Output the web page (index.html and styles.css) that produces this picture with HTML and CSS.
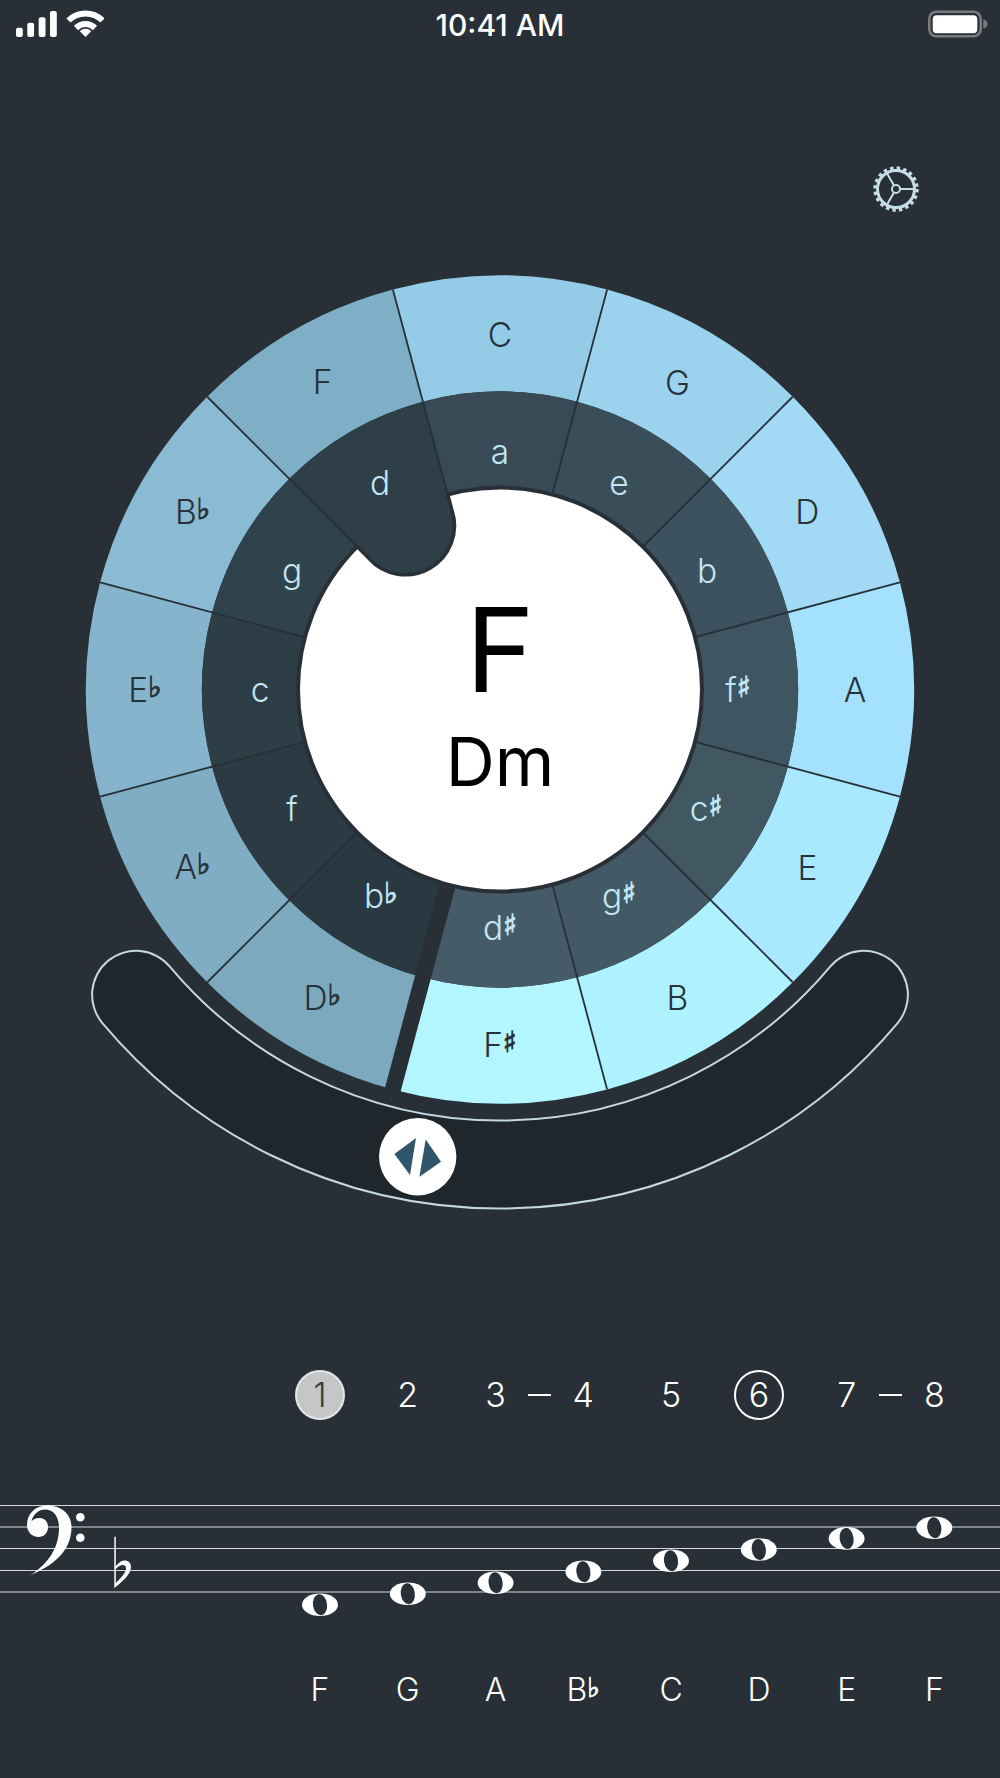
FILE: index.html
```html
<!DOCTYPE html>
<html lang="en">
<head>
    <meta charset="UTF-8">
    <meta name="viewport" content="width=device-width, initial-scale=1.0">
    <title>Circle of Fifths</title>
    <link rel="stylesheet" href="styles.css">
</head>
<body>
    <div class="screen">
        <div class="status">
            <svg class="status-left" width="88" height="28" viewBox="16 10 88 28">
                <rect class="white" x="16" y="27.7" width="6.8" height="9.3" rx="2"/>
                <rect class="white" x="27.3" y="22.7" width="6.8" height="14.3" rx="2"/>
                <rect class="white" x="38.7" y="17.3" width="6.8" height="19.7" rx="2"/>
                <rect class="white" x="50" y="11" width="6.8" height="26" rx="2"/>
                <path class="wifi" d="M68.5 20.5A24 24 0 0 1 102.5 20.5"/>
                <path class="wifi" d="M76 28A13.5 13.5 0 0 1 95 28"/>
                <path class="white" d="M85.5 37L79.8 31.2A8 8 0 0 1 91.2 31.2Z"/>
            </svg>
            <div class="time">10:41 AM</div>
            <svg class="status-right" width="60" height="28" viewBox="928 10 60 28">
                <rect class="batt-border" x="929.3" y="11.7" width="51.4" height="24.6" rx="7"/>
                <rect class="white" x="932.7" y="15.3" width="44.6" height="18" rx="4"/>
                <path class="batt-nub" d="M983.3 19.3C986 20 987.5 22 987.5 24C987.5 26 986 28 983.3 28.7Z"/>
            </svg>
        </div>

        <div class="settings">
            <svg width="48" height="48" viewBox="-24 -24 48 48">
                <circle class="gear gear-ring" r="18.5"/>
                <circle class="gear gear-teeth" r="21"/>
                <circle class="gear" r="4"/>
                <path class="gear" d="M4 0H18M-2 -3.5L-9.2 -16M-2 3.5L-9.2 16"/>
            </svg>
        </div>

        <svg class="wheel" width="1000" height="970" viewBox="-500 -449.5 1000 970">
            <defs>
                <path id="major" d="M-77.13 -287.85L-107.15 -399.9A414 414 0 0 1 107.15 -399.9L77.13 -287.85A298 298 0 0 0 -77.13 -287.85Z"/>
                <path id="minor" d="M-77.13 -287.85A298 298 0 0 1 77.13 -287.85L51.76 -193.2A200 200 0 0 0 -51.76 -193.2Z"/>
            </defs>

            <!-- transpose slider sits behind the wheel -->
            <path class="groove-edge" d="M-363.9 305.3A475 475 0 0 0 363.9 305.3"/>
            <path class="groove" d="M-363.9 305.3A475 475 0 0 0 363.9 305.3"/>

            <!-- outer ring, major keys -->
            <use href="#major" class="maj-c"/>
            <use href="#major" class="maj-g" transform="rotate(30)"/>
            <use href="#major" class="maj-d" transform="rotate(60)"/>
            <use href="#major" class="maj-a" transform="rotate(90)"/>
            <use href="#major" class="maj-e" transform="rotate(120)"/>
            <use href="#major" class="maj-b" transform="rotate(150)"/>
            <use href="#major" class="maj-fs" transform="rotate(180)"/>
            <use href="#major" class="maj-db" transform="rotate(210)"/>
            <use href="#major" class="maj-ab" transform="rotate(240)"/>
            <use href="#major" class="maj-eb" transform="rotate(270)"/>
            <use href="#major" class="maj-bb" transform="rotate(300)"/>
            <use href="#major" class="maj-f" transform="rotate(330)"/>

            <!-- inner ring, relative minors -->
            <use href="#minor" class="min-a"/>
            <use href="#minor" class="min-e" transform="rotate(30)"/>
            <use href="#minor" class="min-b" transform="rotate(60)"/>
            <use href="#minor" class="min-fs" transform="rotate(90)"/>
            <use href="#minor" class="min-cs" transform="rotate(120)"/>
            <use href="#minor" class="min-gs" transform="rotate(150)"/>
            <use href="#minor" class="min-ds" transform="rotate(180)"/>
            <use href="#minor" class="min-bb" transform="rotate(210)"/>
            <use href="#minor" class="min-f" transform="rotate(240)"/>
            <use href="#minor" class="min-c" transform="rotate(270)"/>
            <use href="#minor" class="min-g" transform="rotate(300)"/>

            <circle class="hub" r="202"/>

            <!-- selected minor bulges into the hub -->
            <g transform="rotate(-30)">
                <path class="min-d" d="M-77.13 -287.85A298 298 0 0 1 77.13 -287.85L48 -179.2A49 49 0 0 1 -48 -179.2Z"/>
                <path class="bulge" d="M53.2 -198.6L48 -179.2A49 49 0 0 1 -48 -179.2L-53.2 -198.6"/>
            </g>

            <!-- spokes between the keys -->
            <g class="spokes">
                <line y1="-204" y2="-414" transform="rotate(15)"/>
                <line y1="-204" y2="-414" transform="rotate(45)"/>
                <line y1="-204" y2="-414" transform="rotate(75)"/>
                <line y1="-204" y2="-414" transform="rotate(105)"/>
                <line y1="-204" y2="-414" transform="rotate(135)"/>
                <line y1="-204" y2="-414" transform="rotate(165)"/>
                <line y1="-204" y2="-414" transform="rotate(225)"/>
                <line y1="-204" y2="-414" transform="rotate(255)"/>
                <line y1="-204" y2="-414" transform="rotate(285)"/>
                <line y1="-204" y2="-414" transform="rotate(315)"/>
                <line y1="-190" y2="-414" transform="rotate(345)"/>
            </g>
            <line class="seam" y1="-201" y2="-416" transform="rotate(195)"/>

            <g class="label-major">
                <text x="0" y="-355" dy=".36em">C</text>
                <text x="177.5" y="-307" dy=".36em">G</text>
                <text x="307.4" y="-177.5" dy=".36em">D</text>
                <text x="355" y="0" dy=".36em">A</text>
                <text x="307.4" y="178" dy=".36em">E</text>
                <text x="177.5" y="308.4" dy=".36em">B</text>
                <text x="0" y="355" dy=".36em">F<tspan class="acc">♯</tspan></text>
                <text x="-177.5" y="308" dy=".36em">D<tspan class="acc">♭</tspan></text>
                <text x="-307.4" y="177.5" dy=".36em">A<tspan class="acc">♭</tspan></text>
                <text x="-355" y="0" dy=".36em">E<tspan class="acc">♭</tspan></text>
                <text x="-307.4" y="-177.5" dy=".36em">B<tspan class="acc">♭</tspan></text>
                <text x="-177.5" y="-307.4" dy=".36em">F</text>
            </g>
            <g class="label-minor">
                <text x="0" y="-238" dy=".36em">a</text>
                <text x="119" y="-206.1" dy=".36em">e</text>
                <text x="207" y="-119" dy=".36em">b</text>
                <text x="238" y="0" dy=".36em">f<tspan class="acc">♯</tspan></text>
                <text x="206.1" y="119" dy=".36em">c<tspan class="acc">♯</tspan></text>
                <text x="119" y="206.1" dy=".36em">g<tspan class="acc">♯</tspan></text>
                <text x="0" y="238" dy=".36em">d<tspan class="acc">♯</tspan></text>
                <text x="-119" y="206.1" dy=".36em">b<tspan class="acc">♭</tspan></text>
                <text x="-208" y="119" dy=".36em">f</text>
                <text x="-240" y="0" dy=".36em">c</text>
                <text x="-208" y="-119" dy=".36em">g</text>
                <text x="-120" y="-207" dy=".36em">d</text>
            </g>

            <text class="key-major" x="0" y="2.5">F</text>
            <text class="key-minor" x="0" y="96">Dm</text>

            <!-- slider knob -->
            <g transform="translate(-82.3 467.2)">
                <circle class="white" r="38.7"/>
                <path class="knob-arrow" d="M-1.7 -18.7L-23.3 -2.7L-7.7 18.3Z"/>
                <path class="knob-arrow" d="M8 -17.3L23.3 5L1.7 20Z"/>
            </g>
        </svg>

        <div class="steps">
            <div class="step step-root">1</div>
            <div class="step">2</div>
            <div class="step step-tie">3</div>
            <div class="step">4</div>
            <div class="step">5</div>
            <div class="step step-mark">6</div>
            <div class="step step-tie">7</div>
            <div class="step">8</div>
        </div>

        <svg class="stave" width="1000" height="130" viewBox="0 1490 1000 130">
            <g class="stave-lines">
                <line x1="0" x2="1000" y1="1505.5" y2="1505.5"/>
                <line x1="0" x2="1000" y1="1527" y2="1527"/>
                <line x1="0" x2="1000" y1="1548.5" y2="1548.5"/>
                <line x1="0" x2="1000" y1="1570.5" y2="1570.5"/>
                <line x1="0" x2="1000" y1="1592" y2="1592"/>
            </g>

            <!-- bass clef -->
            <path class="white" d="M30.5 1575C52 1566 71.5 1552 71.5 1527C71.5 1513 60 1505.5 47 1505.5C35 1505.5 27 1514 27 1525C27 1532 32 1537 38.5 1537C44 1537 48 1533 48 1527C48 1521 44 1518 39 1518C36 1518 33 1519.5 31.5 1521.5C33 1514 39 1509.5 45 1509.5C54 1509.5 59 1517 59 1528C59 1548 48 1564 30.5 1575Z"/>
            <circle class="white" cx="80.3" cy="1517.3" r="4.3"/>
            <circle class="white" cx="80.3" cy="1537.7" r="4.3"/>

            <!-- key signature flat -->
            <path class="white" fill-rule="evenodd" d="M114.3 1536.7V1588C122 1582 131 1574 131 1567C131 1561 125 1559 120 1562L115.8 1566V1536.7ZM115.8 1569C118.5 1565 125 1563 126 1567.5C127 1572 121 1578 115.8 1583Z"/>

            <g class="note" transform="translate(320 1604.7)"><ellipse class="white" rx="18" ry="11.3"/><ellipse class="note-hole" rx="7" ry="10.6" transform="rotate(-8)"/></g>
            <g class="note" transform="translate(407.8 1593.7)"><ellipse class="white" rx="18" ry="11.3"/><ellipse class="note-hole" rx="7" ry="10.6" transform="rotate(-8)"/></g>
            <g class="note" transform="translate(495.6 1582.7)"><ellipse class="white" rx="18" ry="11.3"/><ellipse class="note-hole" rx="7" ry="10.6" transform="rotate(-8)"/></g>
            <g class="note" transform="translate(583.4 1571.7)"><ellipse class="white" rx="18" ry="11.3"/><ellipse class="note-hole" rx="7" ry="10.6" transform="rotate(-8)"/></g>
            <g class="note" transform="translate(671 1560.7)"><ellipse class="white" rx="18" ry="11.3"/><ellipse class="note-hole" rx="7" ry="10.6" transform="rotate(-8)"/></g>
            <g class="note" transform="translate(758.8 1549.5)"><ellipse class="white" rx="18" ry="11.3"/><ellipse class="note-hole" rx="7" ry="10.6" transform="rotate(-8)"/></g>
            <g class="note" transform="translate(846.6 1538.4)"><ellipse class="white" rx="18" ry="11.3"/><ellipse class="note-hole" rx="7" ry="10.6" transform="rotate(-8)"/></g>
            <g class="note" transform="translate(934.3 1527.7)"><ellipse class="white" rx="18" ry="11.3"/><ellipse class="note-hole" rx="7" ry="10.6" transform="rotate(-8)"/></g>
        </svg>

        <div class="names">
            <div>F</div>
            <div>G</div>
            <div>A</div>
            <div>B<span class="acc">♭</span></div>
            <div>C</div>
            <div>D</div>
            <div>E</div>
            <div>F</div>
        </div>
    </div>
</body>
</html>
```

FILE: styles.css
```css
*{
    margin: 0;
    padding: 0;
    box-sizing: border-box;
}
body{
    background: #282f36;
    font-family: "Inter", "Liberation Sans", sans-serif;
}
svg{
    display: block;
}
.screen{
    width: 1000px;
    height: 1778px;
    overflow: hidden;
    background: #282f36;
}
.white{
    fill: #fff;
}

/* status bar */
.status{
    height: 150px;
    padding: 10px 12px 0 16px;
    display: grid;
    grid-template-columns: 1fr auto 1fr;
    align-items: start;
}
.status-right{
    justify-self: end;
}
.time{
    margin-right: 4px;
    font-size: 30px;
    font-weight: 500;
    line-height: 31px;
    color: #fff;
}
.wifi{
    fill: none;
    stroke: #fff;
    stroke-width: 6;
}
.batt-border{
    fill: none;
    stroke: #777c80;
    stroke-width: 2.6;
}
.batt-nub{
    fill: #777c80;
}

/* settings gear */
.settings{
    height: 90px;
    padding: 15px 80px 0 0;
    display: flex;
    justify-content: flex-end;
}
.gear{
    fill: none;
    stroke: #c5dde6;
    stroke-width: 2;
}
.gear-ring{
    stroke-width: 3;
}
.gear-teeth{
    stroke-width: 3.4;
    stroke-dasharray: 3.4 3.2;
}

/* wheel */
.groove-edge{
    fill: none;
    stroke: #c3d8e0;
    stroke-width: 90;
    stroke-linecap: round;
}
.groove{
    fill: none;
    stroke: #1f272d;
    stroke-width: 86;
    stroke-linecap: round;
}
.maj-c{ fill: #94cbe7; }
.maj-g{ fill: #9bd2ee; }
.maj-d{ fill: #a2d9f5; }
.maj-a{ fill: #a4e1fc; }
.maj-e{ fill: #a9e9ff; }
.maj-b{ fill: #aef2ff; }
.maj-fs{ fill: #b3f6ff; }
.maj-db{ fill: #7da9bf; }
.maj-ab{ fill: #81adc4; }
.maj-eb{ fill: #86b4cd; }
.maj-bb{ fill: #8abad4; }
.maj-f{ fill: #7fafc6; }
.min-a{ fill: #374a55; }
.min-e{ fill: #394e59; }
.min-b{ fill: #3c525e; }
.min-fs{ fill: #3f5561; }
.min-cs{ fill: #415762; }
.min-gs{ fill: #435a66; }
.min-ds{ fill: #455c68; }
.min-bb{ fill: #293841; }
.min-f{ fill: #2b3a43; }
.min-c{ fill: #2d3e47; }
.min-g{ fill: #30434c; }
.min-d{ fill: #2e3f48; }
.hub{
    fill: #fff;
    stroke: #282f36;
    stroke-width: 4;
}
.bulge{
    fill: none;
    stroke: #282f36;
    stroke-width: 3.5;
}
.spokes line{
    stroke: #273037;
    stroke-width: 1.8;
}
.seam{
    stroke: #282f36;
    stroke-width: 16;
}
.wheel text{
    text-anchor: middle;
}
.label-major{
    font-size: 33.5px;
    font-weight: 350;
    fill: #28323a;
    stroke: #28323a;
    stroke-width: 0;
}
.label-minor{
    font-size: 33.5px;
    font-weight: 350;
    fill: #c1e6f5;
    stroke: #c1e6f5;
    stroke-width: 0;
}
.wheel .acc{
    font-family: "DejaVu Sans", sans-serif;
    font-size: 29px;
    font-weight: 700;
    stroke-width: 0.9px;
    baseline-shift: 5px;
}
.key-major{
    font-size: 117px;
    fill: #000;
}
.key-minor{
    font-size: 68px;
    fill: #000;
}
.knob-arrow{
    fill: #2f566a;
}

/* scale degrees */
.steps{
    margin-top: 160px;
    height: 50px;
    padding-left: 276px;
    display: grid;
    grid-template-columns: repeat(8, 87.8px);
    color: #fff;
    font-size: 34px;
    font-weight: 300;
}
.step{
    position: relative;
    height: 50px;
    line-height: 50px;
    text-align: center;
}
.step-root::before, .step-mark::before{
    content: "";
    box-sizing: border-box;
    position: absolute;
    top: 0;
    left: 18.9px;
    width: 50px;
    height: 50px;
    border-radius: 50%;
    border: 2px solid #fff;
}
.step-root{
    color: #3a4047;
    z-index: 0;
}
.step-root::before{
    background: #c4c6c8;
    border-color: #e4e6e8;
    z-index: -1;
}
/* tie between two degrees */
.step-tie::after{
    content: "";
    position: absolute;
    top: 24px;
    left: 76px;
    width: 23px;
    height: 2px;
    background: #fff;
}

/* stave */
.stave{
    margin-top: 70px;
}
.stave-lines line{
    stroke: #d5d9db;
    stroke-width: 1.2;
}
.note-hole{
    fill: #282f36;
}

/* note names */
.names{
    margin-top: 48px;
    padding-left: 276px;
    display: grid;
    grid-template-columns: repeat(8, 87.8px);
    color: #fff;
    font-size: 32px;
    font-weight: 300;
    line-height: 44px;
    text-align: center;
}
.names .acc{
    position: relative;
    top: -4px;
    font-family: "DejaVu Sans", sans-serif;
    font-size: 27px;
    font-weight: 700;
    -webkit-text-stroke: 0.8px #fff;
}
```
